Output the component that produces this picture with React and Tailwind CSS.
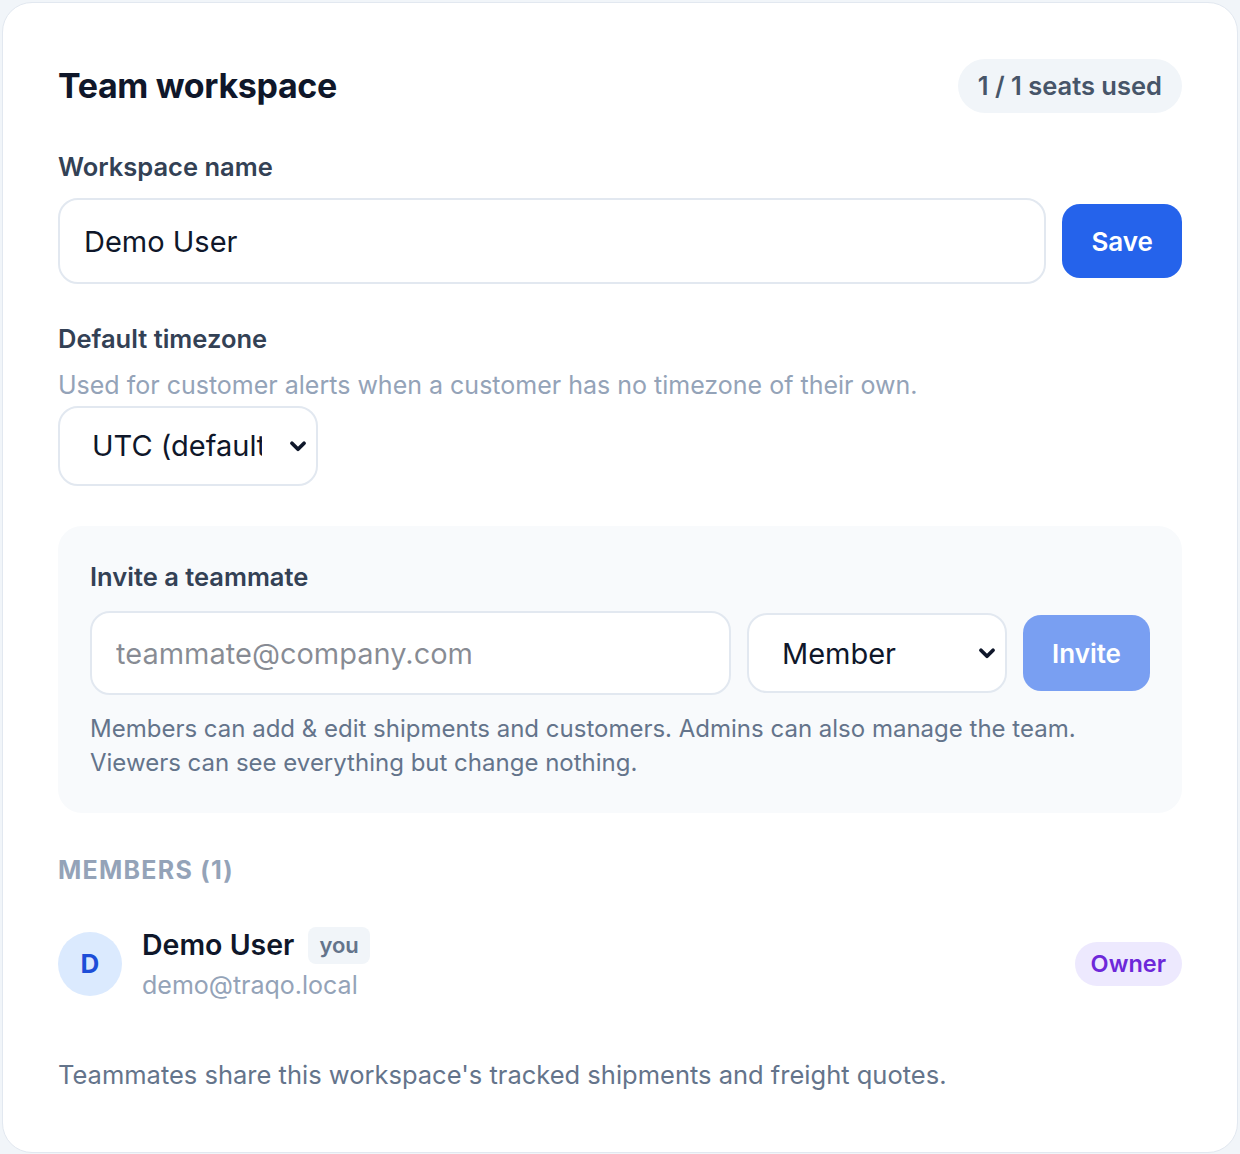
import React from "react";

function Chevron({ className }) {
  return (
    <svg viewBox="0 0 20 20" className={className} fill="none" stroke="currentColor" strokeWidth="3.4" strokeLinecap="round" strokeLinejoin="round">
      <path d="M4.5 7.5L10 13l5.5-5.5" />
    </svg>
  );
}

function Select({ value, options, width, padLeft, padRight, className }) {
  return (
    <div className={`relative ${className}`}>
      <select
        defaultValue={value}
        className={`h-[80px] appearance-none rounded-[20px] border-2 border-[#e2e8f0] bg-white text-[29px] text-[#0f172a] outline-none ${width} ${padLeft} ${padRight}`}
      >
        {options.map((o) => (
          <option key={o.value} value={o.value}>
            {o.label}
          </option>
        ))}
      </select>
      <Chevron className="pointer-events-none absolute right-[9px] top-1/2 h-[22px] w-[22px] -translate-y-1/2 text-[#0f172a]" />
    </div>
  );
}

export default function App() {
  return (
    <div className="min-h-[1154px] bg-[#f1f5f9] p-[2px] pb-[4px]" style={{ fontFamily: "Inter, 'Noto Sans', sans-serif" }}>
      <div className="rounded-[30px] border border-[#e2e8f0] bg-white px-[55px] pt-[56px] pb-[58px]">
        {/* header */}
        <div className="flex items-center justify-between">
          <h1 className="text-[34px] font-bold leading-none tracking-[-0.01em] text-[#0f172a]">Team workspace</h1>
          <span className="flex h-[54px] items-center rounded-full bg-[#f1f5f9] px-[20px] text-[25.5px] font-semibold text-[#475569]">1 / 1 seats used</span>
        </div>

        {/* workspace name */}
        <div className="mt-[35px] text-[25.5px] font-semibold text-[#334155]">Workspace name</div>
        <div className="mt-[12px] flex items-center gap-[16px]">
          <input
            readOnly
            value="Demo User"
            className="h-[86px] flex-1 rounded-[20px] border-2 border-[#e2e8f0] px-[24px] text-[29px] text-[#0f172a] outline-none"
          />
          <button className="h-[74px] rounded-[18px] bg-[#2563eb] px-[29px] text-[26px] font-semibold text-white">Save</button>
        </div>

        {/* timezone */}
        <div className="mt-[36px] text-[25.5px] font-semibold text-[#334155]">Default timezone</div>
        <div className="mt-[8px] text-[25px] text-[#94a3b8]">Used for customer alerts when a customer has no timezone of their own.</div>
        <Select
          className="mt-[2px] w-fit"
          value="utc"
          width="w-[260px]"
          padLeft="pl-[32px]"
          padRight="pr-[54px]"
          options={[
            { value: "utc", label: "UTC (default)" },
            { value: "ny", label: "America/New_York" },
            { value: "ldn", label: "Europe/London" },
          ]}
        />

        {/* invite */}
        <div className="mt-[40px] rounded-[24px] bg-[#f8fafc] px-[32px] pt-[32px] pb-[33px]">
          <div className="text-[25.5px] font-semibold text-[#334155]">Invite a teammate</div>
          <div className="mt-[15px] flex items-center gap-[16px]">
            <input
              type="email"
              placeholder="teammate@company.com"
              className="h-[84px] min-w-0 flex-1 rounded-[20px] border-2 border-[#e2e8f0] bg-white px-[24px] text-[29px] text-[#0f172a] outline-none"
            />
            <Select
              value="member"
              width="w-[260px]"
              padLeft="pl-[33px]"
              padRight="pr-[44px]"
              options={[
                { value: "member", label: "Member" },
                { value: "admin", label: "Admin" },
                { value: "viewer", label: "Viewer" },
              ]}
            />
            <button className="h-[76px] rounded-[18px] bg-[#2563eb]/60 px-[29px] text-[26px] font-semibold text-white">Invite</button>
          </div>
          <p className="mt-[17px] text-[24px] leading-[34px] text-[#64748b]">
            Members can add &amp; edit shipments and customers. Admins can also manage the team.
            <br />
            Viewers can see everything but change nothing.
          </p>
        </div>

        {/* members */}
        <div className="mt-[39px] text-[25px] font-bold uppercase tracking-[0.05em] text-[#94a3b8]">Members (1)</div>
        <div className="mt-[34px] flex items-center justify-between">
          <div className="flex items-center gap-[20px]">
            <div className="flex h-[64px] w-[64px] items-center justify-center rounded-full bg-[#dbeafe] text-[26px] font-bold text-[#1d4ed8]">D</div>
            <div>
              <div className="flex items-center gap-[14px]">
                <span className="text-[28.5px] font-semibold text-[#0f172a]">Demo User</span>
                <span className="rounded-[8px] bg-[#f1f5f9] px-[11px] py-[2px] text-[22px] font-semibold text-[#64748b]">you</span>
              </div>
              <div className="text-[25px] text-[#94a3b8]">demo@traqo.local</div>
            </div>
          </div>
          <span className="flex h-[44px] items-center rounded-full bg-[#ede9fe] px-[16px] text-[23.5px] font-semibold text-[#6d28d9]">Owner</span>
        </div>

        <p className="mt-[52px] text-[25.5px] text-[#64748b]">Teammates share this workspace's tracked shipments and freight quotes.</p>
      </div>
    </div>
  );
}
